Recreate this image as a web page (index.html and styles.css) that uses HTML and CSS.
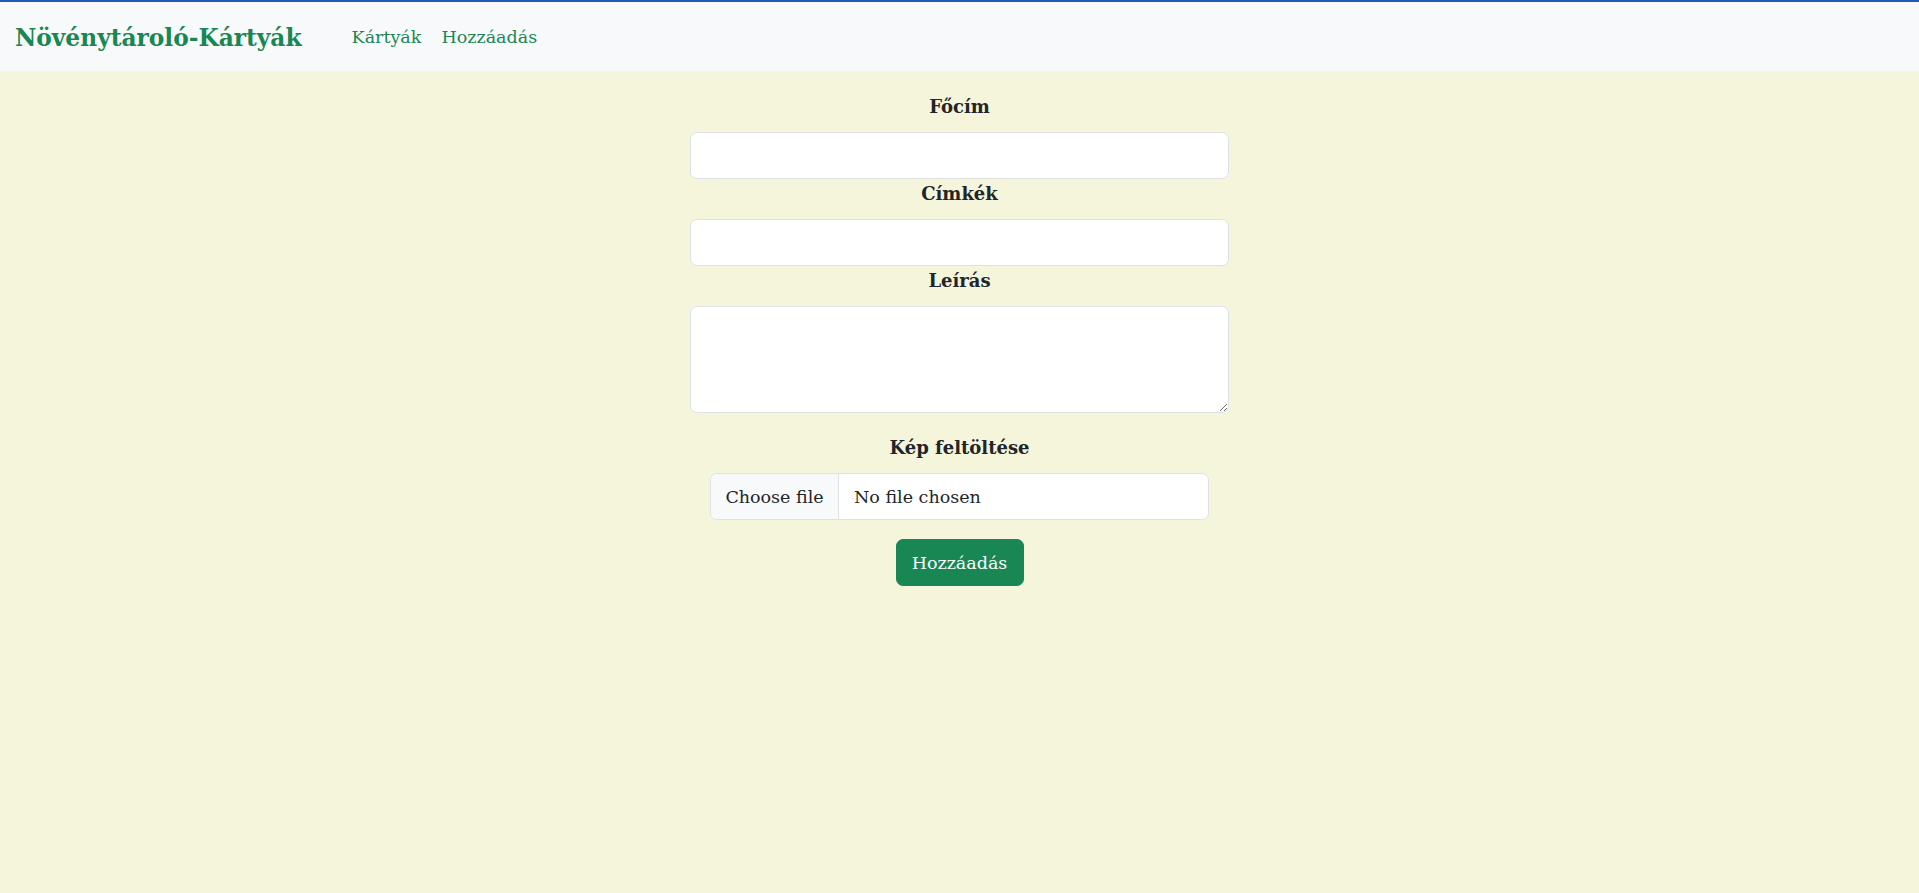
FILE: index.html
```html
<!DOCTYPE html>
<html lang="hu">
<head>
<meta charset="utf-8">
<title>Növénytároló-Kártyák</title>
<link rel="stylesheet" href="styles.css">
</head>
<body>
<header class="navbar">
  <a class="brand" href="#">Növénytároló-Kártyák</a>
  <nav class="nav">
    <a class="nav-link" href="#">Kártyák</a>
    <a class="nav-link" href="#">Hozzáadás</a>
  </nav>
</header>
<main class="page">
  <form class="form">
    <div class="group">
      <label class="label" for="focim">Főcím</label>
      <input class="control" id="focim" type="text">
    </div>
    <div class="group">
      <label class="label" for="cimkek">Címkék</label>
      <input class="control" id="cimkek" type="text">
    </div>
    <div class="group">
      <label class="label" for="leiras">Leírás</label>
      <textarea class="control textarea" id="leiras" rows="3"></textarea>
    </div>
    <div class="group group-file">
      <span class="label">Kép feltöltése</span>
      <label class="file">
        <span class="file-btn">Choose file</span>
        <span class="file-name">No file chosen</span>
        <input class="file-input" type="file">
      </label>
    </div>
    <div class="actions">
      <button class="btn" type="button">Hozzáadás</button>
    </div>
  </form>
</main>
</body>
</html>
```

FILE: styles.css
```css
* { box-sizing: border-box; }

html, body {
  margin: 0;
  padding: 0;
}

body {
  background: #f5f5dc;
  color: #212529;
  font-family: "DejaVu Serif", "Liberation Serif", serif;
  font-size: 17.5px;
  line-height: 30px;
  min-height: 893px;
}

.navbar {
  display: flex;
  align-items: center;
  height: 71px;
  background: #f8f9fa;
  border-top: 2px solid #1f5bb5;
  padding: 0 15px;
}

.brand {
  color: #198754;
  font-weight: bold;
  font-size: 23.3px;
  text-decoration: none;
  margin-right: 40px;
  position: relative;
  top: 1px;
}

.nav {
  display: flex;
}

.nav-link {
  color: #198754;
  text-decoration: none;
  font-size: 17.5px;
  padding: 0 10px;
}

.page {
  display: flex;
  justify-content: center;
  padding-top: 21px;
}

.form {
  width: 539px;
  display: flex;
  flex-direction: column;
  align-items: stretch;
}

.group {
  display: flex;
  flex-direction: column;
  align-items: center;
}

.group-file {
  margin-top: 20px;
}

.label {
  display: block;
  font-weight: bold;
  font-size: 18px;
  line-height: 30px;
  margin-bottom: 10px;
  text-align: center;
}

.control {
  width: 100%;
  height: 47px;
  font: inherit;
  line-height: 30px;
  padding: 7px 15px;
  border: 1px solid #dee2e6;
  border-radius: 7px;
  background: #fff;
  color: #212529;
  outline: none;
}

.textarea {
  height: 107px;
  resize: vertical;
  display: block;
}

.file {
  display: flex;
  width: 499px;
  height: 47px;
  border: 1px solid #dee2e6;
  border-radius: 7px;
  background: #fff;
  overflow: hidden;
  cursor: pointer;
}

.file-btn {
  display: flex;
  align-items: center;
  justify-content: center;
  width: 128px;
  padding: 0 15px;
  background: #f8f9fa;
  border-right: 1px solid #dee2e6;
  white-space: nowrap;
}

.file-name {
  display: flex;
  align-items: center;
  padding: 0 15px;
  white-space: nowrap;
}

.file-input {
  display: none;
}

.actions {
  display: flex;
  justify-content: center;
  margin-top: 19px;
}

.btn {
  font: inherit;
  line-height: 30px;
  color: #fff;
  background: #198754;
  border: 1px solid #198754;
  border-radius: 7px;
  padding: 7px 15px;
  width: 128px;
  height: 47px;
  cursor: pointer;
}
```
